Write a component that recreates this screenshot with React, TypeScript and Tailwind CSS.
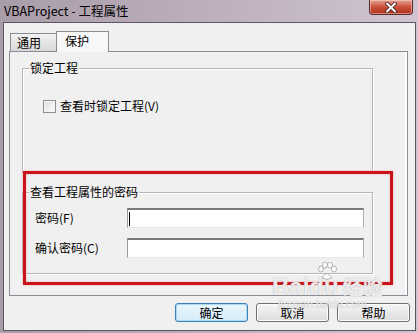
import React from 'react';

const cjk = { fontFamily: '"Noto Sans CJK SC", "DejaVu Sans", sans-serif' };

function GroupBox({ label, className, children }: { label: string; className: string; children?: React.ReactNode }) {
  return (
    <div className={`relative border border-[#b8b8b8] shadow-[inset_1px_1px_0_#ffffff,1px_1px_0_#ffffff] ${className}`}>
      <span className="absolute -top-[9px] left-[6px] bg-[#f0f0f0] px-[1px] text-[12px] leading-[16px] text-black">
        {label}
      </span>
      {children}
    </div>
  );
}

function TextBox({ caret }: { caret?: boolean }) {
  return (
    <div className="w-[237px] h-[20px] bg-white border border-[#abadb3] border-t-[#7a7a7a] border-t-2 border-l-[#9a9a9a] border-b-[#e3e9ef] flex items-center pl-[1px]">
      {caret && <div className="w-px h-[14px] bg-black" />}
    </div>
  );
}

function DlgButton({ label, primary }: { label: string; primary?: boolean }) {
  return (
    <div
      className={`w-[73px] h-[19px] rounded-[3px] border flex items-center justify-center text-[12px] leading-none text-black bg-gradient-to-b ${
        primary
          ? 'border-[#3c7fb1] from-[#eaf6fd] to-[#d5ecfa] shadow-[inset_0_0_0_1px_#a8daf6]'
          : 'border-[#707070] from-[#f6f6f6] to-[#dcdcdc] shadow-[inset_0_0_0_1px_#fcfcfc]'
      }`}
    >
      {label}
    </div>
  );
}

export default function App() {
  return (
    <div className="relative w-[418px] h-[333px] overflow-hidden bg-gradient-to-r from-[#a99ca9] via-[#bdb0bc] to-[#cfc4cf]" style={cjk}>
      {/* Title bar */}
      <div className="h-[22px] flex items-center pl-[4px] text-[12.5px] text-black">
        VBAProject - 工程属性
      </div>

      {/* Close button */}
      <div className="absolute top-0 left-[369px] w-[44px] h-[15px] rounded-b-[4px] border border-t-0 border-[#5a2a2a] bg-gradient-to-b from-[#e6a093] via-[#c94f3a] to-[#b0301c] flex items-center justify-center shadow-[inset_0_0_0_1px_rgba(255,220,210,0.5)]">
        <svg width="12" height="11" viewBox="0 0 12 11">
          <path d="M2 1.5 L10 9.5 M10 1.5 L2 9.5" stroke="#3a2020" strokeWidth="3.6" strokeLinecap="round" />
          <path d="M2 1.5 L10 9.5 M10 1.5 L2 9.5" stroke="#ffffff" strokeWidth="2" strokeLinecap="round" />
        </svg>
      </div>

      {/* Client area */}
      <div className="ml-[3px] w-[413px] h-[309px] border border-[#5c5664] bg-[#f0f0f0] flex flex-col">
        {/* Tabs */}
        <div className="ml-[6px] mt-[8px] h-[20px] flex items-end relative z-10">
          <div className="w-[47px] h-[18px] -mr-[1px] border border-b-0 border-[#898c95] bg-gradient-to-b from-[#f2f2f2] to-[#d8d8d8] text-[12px] leading-[17px] pl-[6px]">
            通用
          </div>
          <div className="w-[53px] h-[21px] -mb-px border border-b-0 border-[#898c95] bg-[#f7f7f7] text-[12px] leading-[17px] pl-[8px]">
            保护
          </div>
        </div>

        {/* Tab panel */}
        <div className="ml-[5px] w-[399px] h-[245px] border border-[#898c95] bg-[#f0f0f0] shadow-[inset_-2px_0_0_#ffffff] flex flex-col">
          <GroupBox label="锁定工程" className="ml-[12px] mt-[16px] w-[351px] h-[105px] shrink-0">
            <div className="flex items-center pl-[20px] pt-[30px] gap-[4px]">
              <div className="w-[13px] h-[13px] border border-[#8e8f8f] bg-gradient-to-br from-[#dcdcdc] to-[#ffffff] shadow-[inset_0_0_0_1px_#f4f4f4]" />
              <span className="text-[12px] leading-[14px]">查看时锁定工程(V)</span>
            </div>
          </GroupBox>

          <GroupBox label="查看工程属性的密码" className="ml-[12px] mt-[19px] w-[351px] h-[82px] shrink-0">
            <div className="flex flex-col pl-[12px] pt-[15px] gap-[10px]">
              <div className="flex items-center">
                <span className="w-[92px] text-[12px]">密码(F)</span>
                <TextBox caret />
              </div>
              <div className="flex items-center">
                <span className="w-[92px] text-[12px]">确认密码(C)</span>
                <TextBox />
              </div>
            </div>
          </GroupBox>
        </div>

        {/* Buttons */}
        <div className="mt-[7px] flex justify-end pr-[5px] gap-[8px]">
          <DlgButton label="确定" primary />
          <DlgButton label="取消" />
          <DlgButton label="帮助" />
        </div>
      </div>

      {/* Red highlight annotation */}
      <div className="absolute left-[23px] top-[171px] w-[370px] h-[114px] border-[3px] border-[#c8141a] shadow-[0_0_2px_#f3a0a0,inset_0_0_2px_#f3a0a0] pointer-events-none" />

      {/* Watermark */}
      <div className="absolute left-[272px] top-[276px] flex flex-col items-start pointer-events-none">
        <div className="flex items-end">
          <span className="text-[24px] font-bold leading-[22px] text-white/80 [text-shadow:0_0_1px_#9a9a9a]" style={{ fontFamily: '"Liberation Sans", sans-serif' }}>
            Baidu
          </span>
          <span className="text-[20px] font-bold leading-[22px] text-white/80 ml-[4px] [text-shadow:0_0_1px_#9a9a9a]">经验</span>
        </div>
        <span className="text-[11px] leading-[12px] text-white/80 ml-[6px] [text-shadow:0_0_1px_#9a9a9a]" style={{ fontFamily: '"Liberation Sans", sans-serif' }}>
          jingyan.baidu.com
        </span>
      </div>
      <svg className="absolute left-[316px] top-[262px] pointer-events-none" width="22" height="20" viewBox="0 0 22 20">
        <g fill="#ffffff" fillOpacity="0.85" stroke="#a0a0a0" strokeWidth="0.8">
          <ellipse cx="5" cy="7" rx="2.5" ry="3" />
          <ellipse cx="9" cy="3" rx="2.5" ry="3" />
          <ellipse cx="14" cy="3" rx="2.5" ry="3" />
          <ellipse cx="18" cy="7" rx="2.5" ry="3" />
          <path d="M6 16 Q11 7 16 16 Q11 19 6 16 Z" />
        </g>
      </svg>
    </div>
  );
}
